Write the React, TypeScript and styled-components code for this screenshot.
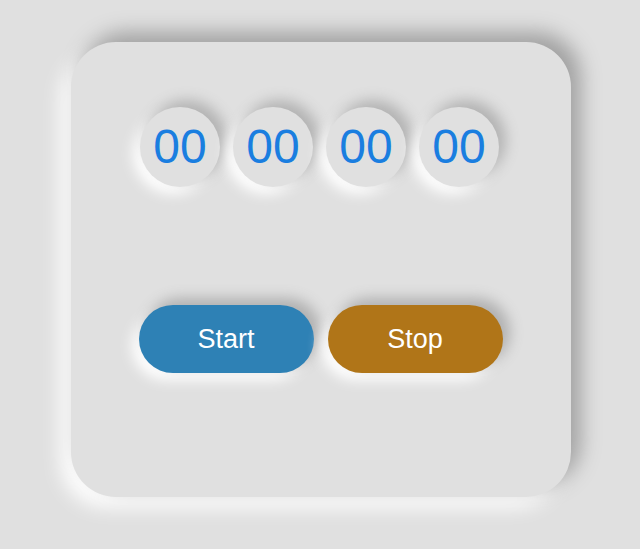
import React from "react";
import styled, { createGlobalStyle } from "styled-components";

const Global = createGlobalStyle`
  html, body {
    margin: 0;
    padding: 0;
    background: #e0e0e0;
    font-family: "Liberation Sans", Arial, sans-serif;
  }
`;

const Page = styled.div`
  display: flex;
  justify-content: center;
  align-items: flex-start;
  min-height: 549px;
  box-sizing: border-box;
  padding-top: 42px;
  padding-left: 1px;
`;

const Card = styled.div`
  width: 500px;
  height: 455px;
  box-sizing: border-box;
  background: #e0e0e0;
  border-radius: 45px;
  box-shadow: 10px -10px 20px #a2a2a2, -10px 10px 20px #ffffff;
  display: flex;
  flex-direction: column;
  align-items: center;
  padding-top: 65px;
`;

const Digits = styled.div`
  display: flex;
  gap: 13px;
  margin-left: -2px;
`;

const Digit = styled.div`
  width: 80px;
  height: 80px;
  border-radius: 50%;
  background: #e0e0e0;
  box-shadow: 7px -7px 14px #b3b3b3, -7px 7px 14px #ffffff;
  display: flex;
  align-items: center;
  justify-content: center;
  color: #1a7ee0;
  font-size: 48px;
  line-height: 1;
`;

const Buttons = styled.div`
  display: flex;
  gap: 14px;
  margin-top: 118px;
`;

const Button = styled.button<{ $bg: string }>`
  width: 175px;
  height: 68px;
  border: none;
  border-radius: 34px;
  background: ${(p) => p.$bg};
  color: #ffffff;
  font-family: "Liberation Sans", Arial, sans-serif;
  font-size: 27px;
  box-shadow: 7px -7px 14px #b0b0b0, -7px 7px 14px #ffffff;
  cursor: pointer;
  padding: 0;
`;

export default function App() {
  return (
    <>
      <Global />
      <Page>
        <Card>
          <Digits>
            <Digit>00</Digit>
            <Digit>00</Digit>
            <Digit>00</Digit>
            <Digit>00</Digit>
          </Digits>
          <Buttons>
            <Button $bg="#2e81b5">Start</Button>
            <Button $bg="#b07518">Stop</Button>
          </Buttons>
        </Card>
      </Page>
    </>
  );
}
